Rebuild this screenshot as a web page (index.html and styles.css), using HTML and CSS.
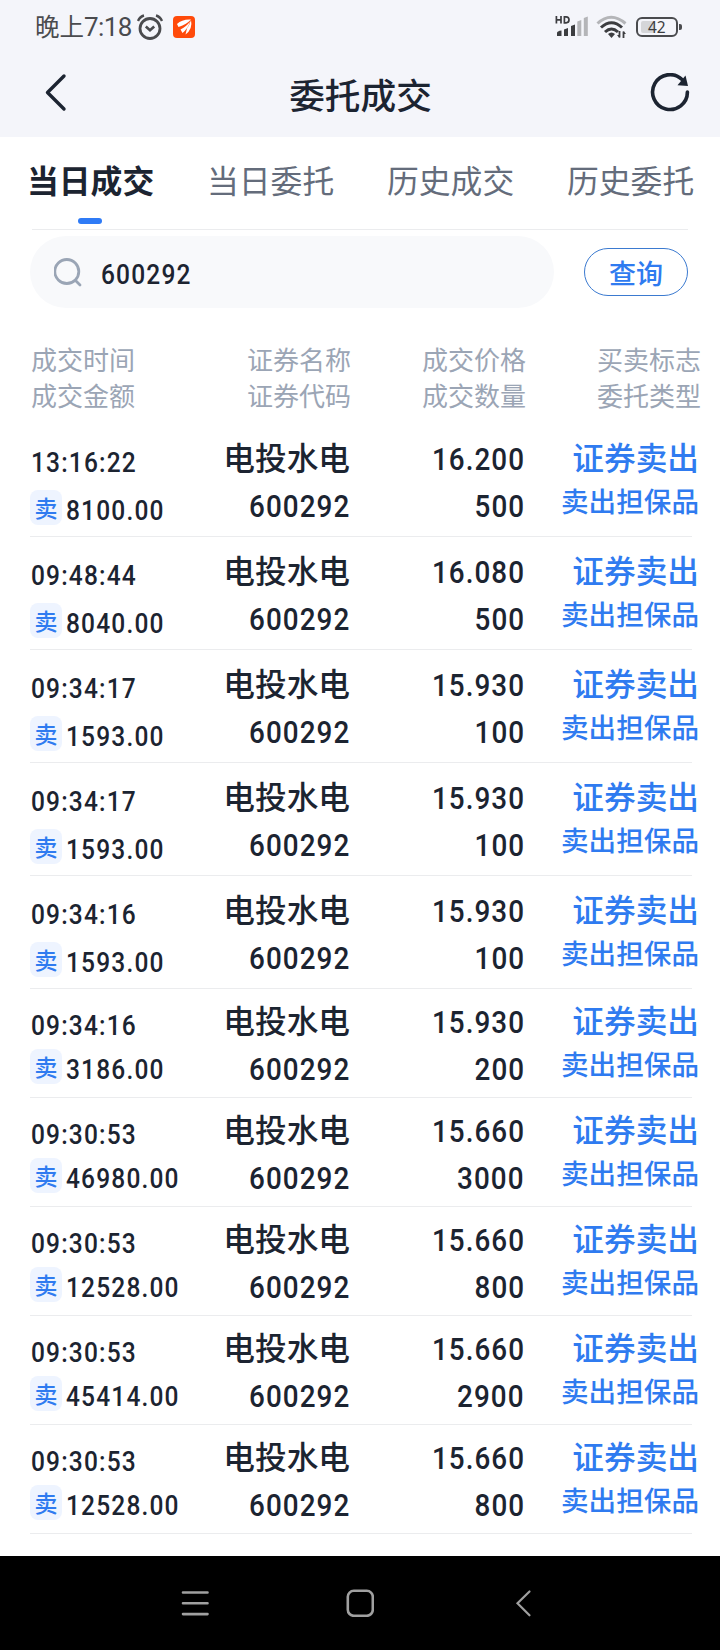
FILE: index.html
```
<!DOCTYPE html>
<html lang="zh-CN">
<head>
<meta charset="utf-8">
<title>委托成交</title>
<link rel="stylesheet" href="styles.css">
</head>
<body>
<header class="top">
  <div class="status">
    <span class="clock">晚上<span class="clock-num">7:18</span></span>
    <svg class="alarm" width="26" height="26" viewBox="0 0 26 26" fill="none" stroke="#4a4b4e"><circle cx="13" cy="14.500" r="10" stroke-width="2.800"/><path d="M8.800 12.500l4.200 3.800 4.200-3.800" stroke-width="2.600"/><path d="M1 7Q3 2.600 7 1.500M25 7Q23 2.600 19 1.500" stroke-width="2.400"/></svg>
    <svg class="app" width="22" height="22" viewBox="0 0 22 22"><rect width="22" height="22" rx="4" fill="#ff4a0a"/><path d="M4 8Q9 3 18 3.500Q14 8 5.500 11ZM7.500 13.500Q14 10 17 5.500Q15 12.500 9.500 17ZM14 12.500Q16.500 9 18 4Q20 13 12.500 18.500Z" fill="#fff"/></svg>
    <span class="spacer"></span>
    <svg class="signal" width="33" height="24" viewBox="0 0 33 24"><g fill="none" stroke="#3c3d40" stroke-width="1.700"><path d="M1.400 1v7.500M6 1v7.500M1.400 4.800H6M9.400 1.800v6h1.700q2.900 0 2.900-3t-2.900-3z"/></g><g fill="#3c3d40"><path d="M2 21v-3q0-2 4.500-2.500V21zM9 21v-6.500l4-1.500v8zM16 21V11l4-1.500V21z"/></g><path d="M22.300 21V6.500l4-1.500v16zM28.800 21V3l4-1.500V21z" fill="#b4b5b8"/></svg>
    <svg class="wifi" width="32" height="24" viewBox="0 0 32 24" fill="none" stroke-width="3"><path d="M1.500 8.500Q15 -4 29.500 8.500" stroke="#b4b5b8"/><path d="M5 12.500Q15.500 3 26 12.500M9 17Q15.500 11 22 17" stroke="#3c3d40"/><path d="M12 19q3.500-3 7 0l-3.500 4z" fill="#3c3d40"/><path d="M23.500 16v6.500M27.500 23v-6.500" stroke="#3c3d40" stroke-width="1.800"/><path d="M21 20h2.500v3zM30 19h-2.500v-3z" fill="#3c3d40"/></svg>
    <span class="battery"><span class="charge"></span><span class="level">42</span></span><span class="battery-cap"></span>
  </div>
  <div class="titlebar">
    <svg class="back" width="24" height="40" viewBox="0 0 24 40" fill="none" stroke="#1c2431" stroke-width="3.400" stroke-linecap="round" stroke-linejoin="round"><path d="M20 3L3.500 19.500 20 36"/></svg>
    <h1 class="title">委托成交</h1>
    <svg class="refresh" width="40" height="40" viewBox="0 0 40 40" fill="none"><path d="M37.400 19A17.400 17.400 0 1 1 32 6.500" stroke="#1c2431" stroke-width="3.600" stroke-linecap="round"/><path d="M35.500 2.500L38 13 27.500 12.200Z" fill="#1c2431"/></svg>
  </div>
</header>
<nav class="tabs">
  <span class="tab active">当日成交</span><span class="tab">当日委托</span><span class="tab">历史成交</span><span class="tab">历史委托</span>
</nav>
<div class="search">
  <div class="field">
    <svg width="28" height="29" viewBox="0 0 28 29" fill="none" stroke="#9aa5b5" stroke-width="2.800" stroke-linecap="round"><circle cx="12.800" cy="13.500" r="12"/><path d="M21.500 22.500l4.500 4.500"/></svg>
    <span class="num num-s">600292</span>
  </div>
  <button class="query">查询</button>
</div>
<div class="columns">
  <div class="head left">成交时间<br>成交金额</div>
  <div class="head">证券名称<br>证券代码</div>
  <div class="head">成交价格<br>成交数量</div>
  <div class="head last">买卖标志<br>委托类型</div>
</div>
<main class="list">
  <section class="row"><div class="when"><span class="num num-s">13:16:22</span><div class="sum"><i class="badge">卖</i><span class="num num-s">8100.00</span></div></div><div class="cell"><b class="name">电投水电</b><span class="num">600292</span></div><div class="cell"><span class="num price">16.200</span><span class="num">500</span></div><div class="cell last"><b class="name">证券卖出</b><span class="type">卖出担保品</span></div></section>
  <section class="row"><div class="when"><span class="num num-s">09:48:44</span><div class="sum"><i class="badge">卖</i><span class="num num-s">8040.00</span></div></div><div class="cell"><b class="name">电投水电</b><span class="num">600292</span></div><div class="cell"><span class="num price">16.080</span><span class="num">500</span></div><div class="cell last"><b class="name">证券卖出</b><span class="type">卖出担保品</span></div></section>
  <section class="row"><div class="when"><span class="num num-s">09:34:17</span><div class="sum"><i class="badge">卖</i><span class="num num-s">1593.00</span></div></div><div class="cell"><b class="name">电投水电</b><span class="num">600292</span></div><div class="cell"><span class="num price">15.930</span><span class="num">100</span></div><div class="cell last"><b class="name">证券卖出</b><span class="type">卖出担保品</span></div></section>
  <section class="row"><div class="when"><span class="num num-s">09:34:17</span><div class="sum"><i class="badge">卖</i><span class="num num-s">1593.00</span></div></div><div class="cell"><b class="name">电投水电</b><span class="num">600292</span></div><div class="cell"><span class="num price">15.930</span><span class="num">100</span></div><div class="cell last"><b class="name">证券卖出</b><span class="type">卖出担保品</span></div></section>
  <section class="row"><div class="when"><span class="num num-s">09:34:16</span><div class="sum"><i class="badge">卖</i><span class="num num-s">1593.00</span></div></div><div class="cell"><b class="name">电投水电</b><span class="num">600292</span></div><div class="cell"><span class="num price">15.930</span><span class="num">100</span></div><div class="cell last"><b class="name">证券卖出</b><span class="type">卖出担保品</span></div></section>
  <section class="row tight"><div class="when"><span class="num num-s">09:34:16</span><div class="sum"><i class="badge">卖</i><span class="num num-s">3186.00</span></div></div><div class="cell"><b class="name">电投水电</b><span class="num">600292</span></div><div class="cell"><span class="num price">15.930</span><span class="num">200</span></div><div class="cell last"><b class="name">证券卖出</b><span class="type">卖出担保品</span></div></section>
  <section class="row tight"><div class="when"><span class="num num-s">09:30:53</span><div class="sum"><i class="badge">卖</i><span class="num num-s">46980.00</span></div></div><div class="cell"><b class="name">电投水电</b><span class="num">600292</span></div><div class="cell"><span class="num price">15.660</span><span class="num">3000</span></div><div class="cell last"><b class="name">证券卖出</b><span class="type">卖出担保品</span></div></section>
  <section class="row tight"><div class="when"><span class="num num-s">09:30:53</span><div class="sum"><i class="badge">卖</i><span class="num num-s">12528.00</span></div></div><div class="cell"><b class="name">电投水电</b><span class="num">600292</span></div><div class="cell"><span class="num price">15.660</span><span class="num">800</span></div><div class="cell last"><b class="name">证券卖出</b><span class="type">卖出担保品</span></div></section>
  <section class="row tight"><div class="when"><span class="num num-s">09:30:53</span><div class="sum"><i class="badge">卖</i><span class="num num-s">45414.00</span></div></div><div class="cell"><b class="name">电投水电</b><span class="num">600292</span></div><div class="cell"><span class="num price">15.660</span><span class="num">2900</span></div><div class="cell last"><b class="name">证券卖出</b><span class="type">卖出担保品</span></div></section>
  <section class="row tight"><div class="when"><span class="num num-s">09:30:53</span><div class="sum"><i class="badge">卖</i><span class="num num-s">12528.00</span></div></div><div class="cell"><b class="name">电投水电</b><span class="num">600292</span></div><div class="cell"><span class="num price">15.660</span><span class="num">800</span></div><div class="cell last"><b class="name">证券卖出</b><span class="type">卖出担保品</span></div></section>
</main>
<footer class="navbar">
  <svg width="28" height="28" viewBox="0 0 28 28" stroke="#a0a0a0" stroke-width="2.600" stroke-linecap="round"><path d="M2 3.500h24.500M2 14.300h24.500M2 25.100h24.500"/></svg>
  <svg width="28" height="28" viewBox="0 0 28 28" fill="none" stroke="#a0a0a0" stroke-width="2.600"><rect x="1.800" y="1.800" width="25" height="25" rx="6"/></svg>
  <svg width="28" height="28" viewBox="0 0 28 28" fill="none" stroke="#a0a0a0" stroke-width="2.200" stroke-linecap="round"><path d="M18.500 2.500L6.500 14.300l12 12"/></svg>
</footer>
</body>
</html>
```
FILE: styles.css
```
* { box-sizing: border-box; }
body {
  margin: 0;
  width: 720px;
  height: 1650px;
  display: flex;
  flex-direction: column;
  background: #fff;
  color: #1c2431;
  font-family: "Noto Sans CJK SC", sans-serif;
}
svg { display: block; flex: none; }

.top { height: 137px; background: #f4f5fa; }
.status { display: flex; height: 54px; padding: 0 38px 0 35px; align-items: center; }
.clock { display: flex; width: 96px; font-size: 24.5px; line-height: 50px; color: #4a4b4e; white-space: nowrap; }
.clock-num { font-family: Roboto, sans-serif; font-size: 26px; line-height: 53px; letter-spacing: -.6px; }
.alarm { margin-left: 6px; }
.app { margin-left: 10px; }
.spacer { flex: 1; }
.signal { margin-right: 8px; }
.wifi { margin-right: 8px; }
.battery {
  display: flex;
  width: 42px;
  height: 20px;
  border: 2px solid #4a4b4e;
  border-radius: 6px;
  padding: 2px 3px;
}
.charge { flex: none; width: 14px; height: 12px; background: #d5d6d9; border-radius: 2px; }
.level { margin-left: -7px; font: 400 15.5px/13px "Noto Sans", sans-serif; color: #3c3d40; }
.battery-cap { width: 3px; height: 6px; margin: 0 0 0 1px; background: #4a4b4e; border-radius: 0 2px 2px 0; }

.titlebar { display: flex; height: 80px; padding: 0 30px 0 44px; align-items: center; justify-content: space-between; }
.title { margin: 0; padding-left: 3px; font-size: 35.7px; font-weight: 500; line-height: 74px; }
.back, .refresh { margin-top: -2px; }

.tabs {
  display: flex;
  gap: 50px;
  height: 93px;
  margin: 0 32px;
  border-bottom: 1px solid #ebecee;
}
.tab { flex: none; width: 130px; font-size: 31.8px; line-height: 84px; color: #646c7b; white-space: nowrap; margin-left: -5px; margin-right: 5px; }
.active { display: flex; flex-direction: column; font-weight: 700; color: #1c2431; }
.active::after { content: ""; width: 24px; height: 6px; margin: -3px 0 0 51px; border-radius: 3px; background: #2f7bf6; }

.search { display: flex; align-items: center; justify-content: space-between; padding: 6px 32px 0 30px; }
.field { display: flex; align-items: center; gap: 19px; width: 524px; height: 72px; padding-left: 24px; border-radius: 36px; background: #f8f9fb; }
.field .num { margin-top: 5px; }
.query {
  width: 104px;
  height: 48px;
  padding: 0;
  border: 1px solid #3b7ad0;
  border-radius: 24px;
  background: #fff;
  color: #2f7bf0;
  font: 500 27px/45px "Noto Sans CJK SC", sans-serif;
}

.columns, .row { display: grid; grid-template-columns: 145px 175px 175px 167px; margin: 0 28px 0 30px; }
.columns { height: 116px; padding-top: 33px; }
.head { margin-right: -1px; text-align: right; font-size: 26px; line-height: 36px; color: #9ba5b5; }
.left { padding-left: 1px; text-align: left; }
.last { margin-right: -7px; color: #2f7bf0; }
.head.last { margin-right: -9px; color: #9ba5b5; }

.row { height: 113px; padding-top: 12px; border-bottom: 1px solid #ebecee; }
.tight { height: 109px; padding-top: 10px; }
.num {
  font: 500 32px/39px Roboto, sans-serif;
  letter-spacing: 1.2px;
  transform: scaleX(.87);
  transform-origin: right;
}
.num-s { font-size: 28px; line-height: 28px; letter-spacing: 1.35px; transform: scaleX(.875); transform-origin: left; }
.when { display: flex; flex-direction: column; gap: 13px; padding: 13px 0 0 1px; }
.tight .when { gap: 9px; }
.sum { display: flex; align-items: center; gap: 4px; height: 35px; margin-left: -1px; }
.sum .num { margin-top: 6px; }
.badge {
  flex: none;
  width: 32px;
  height: 35px;
  border-radius: 8px;
  background: #eef4ff;
  color: #2f7bf0;
  font-size: 23px;
  font-style: normal;
  font-weight: 500;
  line-height: 34px;
  text-align: center;
}
.cell { display: flex; flex-direction: column; align-items: flex-end; white-space: nowrap; }
.name { font-size: 31.7px; font-weight: 500; line-height: 40px; }
.name + .num { margin-top: 11px; }
.price { margin: 4px 0 8px; }
.type { margin-top: 7px; font-size: 27.6px; font-weight: 500; line-height: 35px; }

.navbar { display: flex; justify-content: space-between; align-items: center; height: 94px; margin-top: auto; padding: 0 181px; background: #000; }
```
